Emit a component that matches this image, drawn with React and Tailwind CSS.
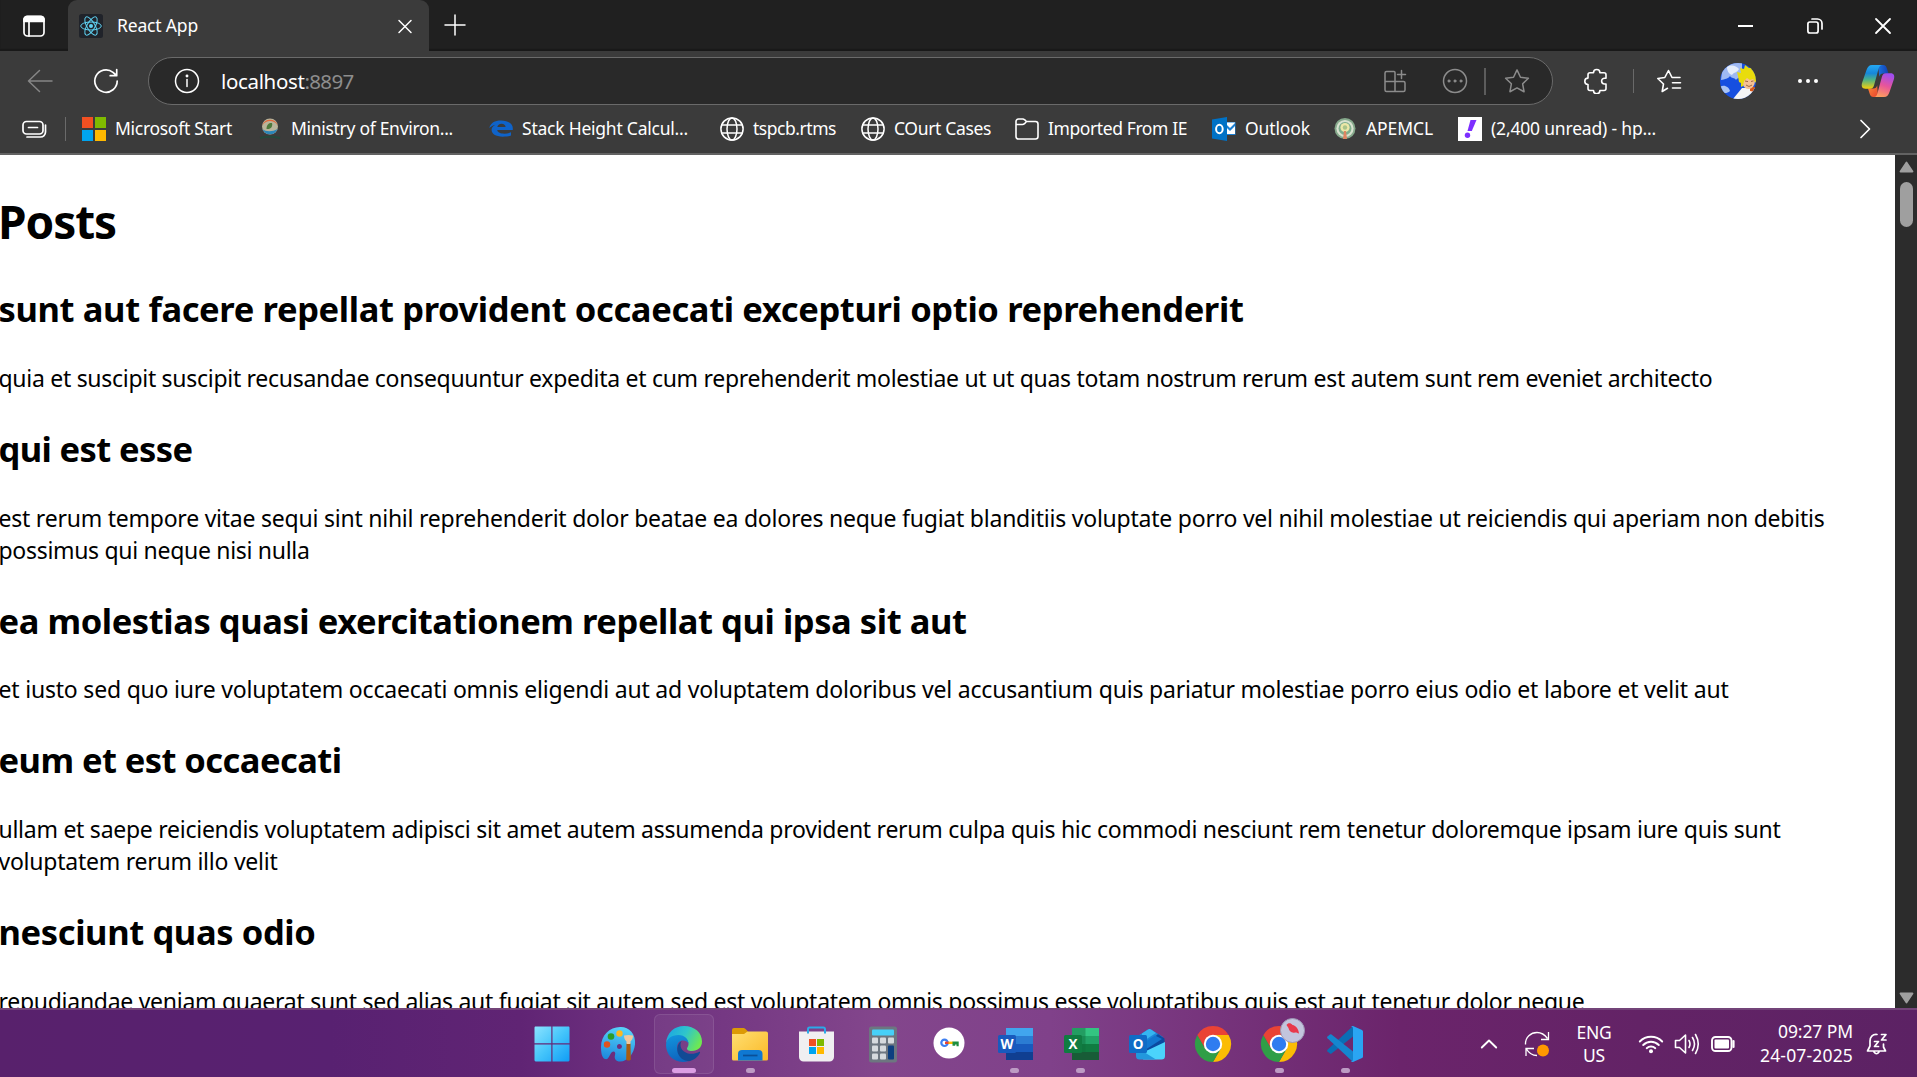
import { useLayoutEffect, useRef } from "react";

/* Single line of text tracked so that it spans exactly `w` pixels. */
function Fit({ w, children, className = "" }) {
  const ref = useRef(null);
  useLayoutEffect(() => {
    const el = ref.current;
    el.style.letterSpacing = "0px";
    const natural = el.getBoundingClientRect().width;
    el.style.letterSpacing = (w - natural) / children.length + "px";
  }, [w, children]);
  return (
    <span ref={ref} className={"inline-block whitespace-pre " + className}>
      {children}
    </span>
  );
}

function Svg({ s = 24, className = "", children, sw = 1.4, vb = "0 0 24 24" }) {
  return (
    <svg width={s} height={s} viewBox={vb} fill="none" stroke="currentColor" strokeWidth={sw} strokeLinecap="round" strokeLinejoin="round" className={"block shrink-0 " + className}>
      {children}
    </svg>
  );
}

const posts = [
  { title: ["sunt aut facere repellat provident occaecati excepturi optio reprehenderit", 1245], lines: [["quia et suscipit suscipit recusandae consequuntur expedita et cum reprehenderit molestiae ut ut quas totam nostrum rerum est autem sunt rem eveniet architecto", 1714]] },
  { title: ["qui est esse", 194], lines: [["est rerum tempore vitae sequi sint nihil reprehenderit dolor beatae ea dolores neque fugiat blanditiis voluptate porro vel nihil molestiae ut reiciendis qui aperiam non debitis", 1826], ["possimus qui neque nisi nulla", 311]] },
  { title: ["ea molestias quasi exercitationem repellat qui ipsa sit aut", 968], lines: [["et iusto sed quo iure voluptatem occaecati omnis eligendi aut ad voluptatem doloribus vel accusantium quis pariatur molestiae porro eius odio et labore et velit aut", 1730]] },
  { title: ["eum et est occaecati", 343], lines: [["ullam et saepe reiciendis voluptatem adipisci sit amet autem assumenda provident rerum culpa quis hic commodi nesciunt rem tenetur doloremque ipsam iure quis sunt", 1782], ["voluptatem rerum illo velit", 279]] },
  { title: ["nesciunt quas odio", 317], lines: [["repudiandae veniam quaerat sunt sed alias aut fugiat sit autem sed est voluptatem omnis possimus esse voluptatibus quis est aut tenetur dolor neque", 1586]] },
];

function ReactLogo() {
  return (
    <svg width="24" height="24" viewBox="0 0 24 24" fill="none" stroke="#5fd3f3" strokeWidth="1" className="shrink-0">
      <rect width="24" height="24" rx="2.5" fill="#20232a" stroke="none" />
      <ellipse cx="12" cy="12" rx="10.3" ry="4" />
      <ellipse cx="12" cy="12" rx="10.3" ry="4" transform="rotate(60 12 12)" />
      <ellipse cx="12" cy="12" rx="10.3" ry="4" transform="rotate(120 12 12)" />
      <circle cx="12" cy="12" r="2" fill="#5fd3f3" stroke="none" />
    </svg>
  );
}

function MicrosoftIcon() {
  return (
    <div className="grid h-6 w-6 shrink-0 grid-cols-2 gap-[2px]">
      <div className="bg-[#f25022]" />
      <div className="bg-[#7fba00]" />
      <div className="bg-[#00a4ef]" />
      <div className="bg-[#ffb900]" />
    </div>
  );
}

function MinistryIcon() {
  return (
    <svg width="24" height="24" viewBox="0 0 24 24" className="shrink-0">
      <circle cx="12" cy="9.500" r="8" fill="#b9b49a" />
      <path d="M4.300 8.500a8 8 0 0 1 15.400 0c-2-3.500-5-4.500-7.700-4.500S6.500 5 4.300 8.500Z" fill="#e2683c" />
      <path d="M4.500 12c3 3 10 3 15 0a8 8 0 0 1-15 0Z" fill="#2a86b8" />
      <path d="M8.500 12c0-5 3-6.500 5.500-6 1 3.500-1 6.500-5.500 6Z" fill="#4d7a3c" />
      <path d="M2 21q10-2.500 20 0" stroke="#24493a" strokeWidth="2" fill="none" />
    </svg>
  );
}

function LegacyEdgeIcon() {
  return (
    <svg width="24" height="24" viewBox="0 0 24 24" className="shrink-0">
      <path fillRule="evenodd" transform="translate(0 .8) scale(1 .86)" d="M.3 12C1.500 5.800 5.800 3 12 3c7.500 0 12 4.300 11.800 9.500v1.800H8.200c.5 3 3.500 4.200 7 4.200 2.500 0 4.800-.7 6.800-1.600v3.600c-2 1-5 1.500-8.200 1.500C6.500 22 2.600 18.600 2.600 14c0-2.600 1.400-4.800 3.800-6C4 8.500 2 9.800.3 12Zm8-1.300h8.300C16.500 8.600 15 7 12.500 7c-2.300 0-3.800 1.500-4.200 3.700Z" fill="#0f63c9" />
    </svg>
  );
}

function GlobeIcon() {
  return (
    <Svg sw={1.5}>
      <circle cx="12" cy="12" r="11.100" />
      <ellipse cx="12" cy="12" rx="5" ry="11.100" />
      <path d="M2 8h20M2 16h20" />
    </Svg>
  );
}

function FolderIcon() {
  return (
    <Svg sw={1.6}>
      <path d="M1 4.500A2.500 2.500 0 0 1 3.500 2h4.300c.7 0 1.300.3 1.700.7L11.500 4.500h9A2.500 2.500 0 0 1 23 7v12.500a2.500 2.500 0 0 1-2.500 2.500h-17A2.500 2.500 0 0 1 1 19.500ZM1 7.500h6.500c.8 0 1.400-.3 2-.8l2-2.200" />
    </Svg>
  );
}

function OldOutlookIcon() {
  return (
    <svg width="24" height="24" viewBox="0 0 24 24" className="shrink-0">
      <path d="M13 5h10.500v13H13Z" fill="#1a7fd4" />
      <path d="M14.500 7.500 18 11l5-5v-.5h-8.500ZM14.500 10.500l3.500 3.500 5-5v8h-8.500Z" fill="#fff" />
      <path d="M0 2.500 15 0v24L0 21.500Z" fill="#0072c6" />
      <ellipse cx="7.400" cy="12" rx="3.300" ry="4.200" fill="none" stroke="#fff" strokeWidth="2" />
    </svg>
  );
}

function ApemclIcon() {
  return (
    <svg width="24" height="24" viewBox="0 0 24 24" className="shrink-0">
      <circle cx="12" cy="11.500" r="10.500" fill="#86a98c" />
      <circle cx="12" cy="11.500" r="8.600" fill="#d8e2d0" />
      <circle cx="12" cy="11.500" r="6.500" fill="#7fae8d" />
      <circle cx="12" cy="10.500" r="4.600" fill="#ece7a8" />
      <circle cx="12" cy="10.500" r="2.200" fill="#a9c489" />
      <path d="M11 14h2l1 8h-4Z" fill="#e08562" />
    </svg>
  );
}

function YahooIcon() {
  return (
    <svg width="24" height="24" viewBox="0 0 24 24" className="shrink-0">
      <rect width="24" height="24" fill="#fff" />
      <path d="M12.500 3h6l-4.700 11h-4.300Z" fill="#7d2eff" />
      <circle cx="9.500" cy="18.300" r="2.700" fill="#7d2eff" />
    </svg>
  );
}

const bookmarks = [
  { icon: MicrosoftIcon, text: "Microsoft Start", w: 117, box: "w-[176px]" },
  { icon: MinistryIcon, text: "Ministry of Environ...", w: 162, box: "w-[231px]" },
  { icon: LegacyEdgeIcon, text: "Stack Height Calcul...", w: 166, box: "w-[231px]" },
  { icon: GlobeIcon, text: "tspcb.rtms", w: 83, box: "w-[141px]" },
  { icon: GlobeIcon, text: "COurt Cases", w: 97, box: "w-[154px]" },
  { icon: FolderIcon, text: "Imported From IE", w: 139, box: "w-[197px]" },
  { icon: OldOutlookIcon, text: "Outlook", w: 65, box: "w-[121px]" },
  { icon: ApemclIcon, text: "APEMCL", w: 67, box: "w-[125px]" },
  { icon: YahooIcon, text: "(2,400 unread) - hp...", w: 165, box: "w-[200px]" },
];

function TabStrip() {
  return (
    <div className="flex h-[51px] bg-[#202020] shadow-[inset_0_-2px_1px_#191919]">
      <div className="flex w-[68px] items-center justify-center">
        <Svg s={24} sw={1.7} className="text-white">
          <rect x="2" y="2.300" width="20" height="19.700" rx="3.500" />
          <path d="M2 7.500V5.500A3 3 0 0 1 5 2.500h14a3 3 0 0 1 3 3v2Z" fill="currentColor" />
          <path d="M7 8v14" />
        </Svg>
      </div>
      <div className="flex w-[361px] items-center rounded-t-[9px] bg-[#3b3b3b] pl-[11px]">
        <ReactLogo />
        <div className="ml-[14px] grow text-[17.500px] text-white">
          <Fit w={81}>React App</Fit>
        </div>
        <Svg s={16} vb="0 0 16 16" sw={1.500} className="mr-4 text-white">
          <path d="M2 2.500 14 14.500M14 2.500 2 14.500" />
        </Svg>
      </div>
      <Svg s={24} sw={1.500} className="mt-[13px] ml-[14px] text-white">
        <path d="M12 2v20M2 12h20" />
      </Svg>
      <div className="ml-auto flex items-center text-white">
        <div className="flex w-[69px] justify-center"><div className="h-[2px] w-[15px] bg-white" /></div>
        <div className="flex w-[69px] justify-center">
          <Svg s={18} vb="0 0 18 18" sw={1.700}>
            <rect x="1.900" y="5" width="10.200" height="11" rx="2" />
            <path d="M6 2h5.500A4.500 4.500 0 0 1 16 6.500V12" />
          </Svg>
        </div>
        <div className="flex w-[68px] justify-center">
          <Svg s={18} vb="0 0 18 18" sw={1.800}>
            <path d="M2 2l14 14M16 2 2 16" />
          </Svg>
        </div>
      </div>
    </div>
  );
}

function Avatar() {
  return (
    <svg width="36" height="36" viewBox="0 0 36 36" className="shrink-0">
      <defs>
        <clipPath id="av"><circle cx="18" cy="18" r="18" /></clipPath>
      </defs>
      <g clipPath="url(#av)">
        <rect width="36" height="36" fill="#164fe0" />
        <path d="M3 0h19v12c-2 3-4 2-6 5-2-3-4-1-6-4-2 3-5 3-9 4Z" fill="#9fb9f2" />
        <path d="M7 4c5-3 9-1 12 2-2 4-5 3-7 6-3-1-5-4-5-8Z" fill="#e5edfb" />
        <path d="M0 24c4-3 9 0 10 4-3 3-7 2-10 1Z" fill="#a9c4f4" />
        <path d="M22 25 13 36h22V25Z" fill="#f4f5f5" />
        <path d="M30 24h6l-1 5-5-1Z" fill="#d65618" />
        <ellipse cx="28.500" cy="18" rx="6.500" ry="8" fill="#f5c194" />
        <path d="M18 13 17 9l4 1-1-5 4 1 1-4 4 3 4-1 3 8v8l-3-4-3 1-3-2-3 3-1 5-2 1v-4l-2-1Z" fill="#e9dc0c" />
        <path d="m25 18 3 .6M31 18.500l2.500-.6M26 22q3 3 6 0" stroke="#8a5330" strokeWidth=".8" fill="none" />
      </g>
    </svg>
  );
}

function Copilot() {
  return (
    <svg width="34" height="34" viewBox="0 0 34 34" className="shrink-0">
      <defs>
        <linearGradient id="cpa" x1="0" y1="0" x2="0" y2="1"><stop offset="0" stopColor="#25a9f3" /><stop offset=".35" stopColor="#1687da" /><stop offset=".62" stopColor="#4db286" /><stop offset="1" stopColor="#f5cf0b" /></linearGradient>
        <linearGradient id="cpb" x1=".6" y1="0" x2=".3" y2="1"><stop offset="0" stopColor="#a04df0" /><stop offset=".5" stopColor="#e8559a" /><stop offset="1" stopColor="#fda05c" /></linearGradient>
        <linearGradient id="cpc" x1="0" y1="0" x2="1" y2="0"><stop offset="0" stopColor="#1b74dd" /><stop offset="1" stopColor="#123fb5" /></linearGradient>
        <linearGradient id="cpd" x1="0" y1="0" x2="1" y2="1"><stop offset="0" stopColor="#fb8a3b" /><stop offset="1" stopColor="#e8432d" /></linearGradient>
      </defs>
      <path d="M17 1h5c2.500 0 3.300 1.500 4 3.800L27.500 9.500H22c-2 0-3 1-3.700 3.300Z" fill="url(#cpc)" />
      <path d="M17 33h-4.500c-2.500 0-3.300-1.500-4-3.800L7 24.500h5.500c2 0 3-1 3.700-3.300Z" fill="url(#cpd)" />
      <path d="M21.500 1H11C8 1 6.500 3 5.500 6L1.200 18.500C0 22 1 24.700 4.500 24.700H9c2.500 0 3.500-1.500 4.200-4L17.500 5c.7-2.500 1.800-4 4-4Z" fill="url(#cpa)" />
      <path d="M13 33h10c3 0 4.500-2 5.500-5l4.300-12.500C34 12 33 9.300 29.500 9.300H25c-2.500 0-3.500 1.500-4.200 4L16.500 29c-.7 2.500-1.500 4-3.500 4Z" fill="url(#cpb)" />
    </svg>
  );
}

function Toolbar() {
  return (
    <div className="flex h-[60px] items-center text-white">
      <div className="flex w-20 justify-center">
        <Svg s={26} vb="0 0 26 26" sw={1.500} className="text-[#868686]"><path d="M25 13H1.500M12.500 2.500 1.500 13l11 10.500" /></Svg>
      </div>
      <div className="flex w-[52px] justify-center">
        <Svg s={26} vb="0 0 26 26" sw={1.700}>
          <path d="M24.200 13A11.200 11.200 0 1 1 20 4.300L23.500 7.500M23.700 1.500v6.200H17.200" />
        </Svg>
      </div>
      <div className="ml-4 flex h-12 w-[1405px] items-center rounded-full border border-[#6a6a6a] bg-[#292929]">
        <Svg s={26} vb="0 0 26 26" sw={1.500} className="ml-[25px]">
          <circle cx="13" cy="13" r="11.500" />
          <path d="M13 11.500v7" />
          <circle cx="13" cy="8" r=".7" fill="currentColor" />
        </Svg>
        <div className="ml-[21px] flex grow text-[20.500px]">
          <Fit w={83.5}>localhost</Fit>
          <Fit w={49} className="text-[#8d8d8d]">:8897</Fit>
        </div>
        <div className="flex items-center text-[#8c8c8c]">
          <Svg s={24} sw={1.500}>
            <path d="M2 21V4a1.500 1.500 0 0 1 1.500-1.500H11a1 1 0 0 1 1 1V22.500H3.500A1.500 1.500 0 0 1 2 21ZM2 12.500h18.500A1.500 1.500 0 0 1 22 14v7a1.500 1.500 0 0 1-1.500 1.500H12M18.500 1.500v8M14.500 5.500h8" />
          </Svg>
          <Svg s={26} vb="0 0 26 26" sw={1.500} className="ml-[35px]">
            <circle cx="13" cy="13" r="11.500" />
            <g fill="currentColor" strokeWidth=".6"><circle cx="7" cy="13" r="1.200" /><circle cx="13" cy="13" r="1.200" /><circle cx="19" cy="13" r="1.200" /></g>
          </Svg>
          <div className="ml-4 h-[27px] w-[2px] bg-[#5c5c5c]" />
          <Svg s={26} vb="0 0 24 24" sw={1.400} className="mr-[22px] ml-[18px]">
            <path d="m12 1.800 3.200 6.700 7.300 1-5.300 5.100 1.300 7.300L12 18.400l-6.500 3.500 1.300-7.300L1.500 9.500l7.300-1Z" />
          </Svg>
        </div>
      </div>
      <Svg s={26} vb="0 0 26 26" sw={1.600} className="ml-[30px]">
        <path d="M10.500 4.700a3.200 3.200 0 0 1 6.400 0H21a2 2 0 0 1 2 2v3.500h-1.500a2.900 2.900 0 0 0 0 5.800H23v4.500a2 2 0 0 1-2 2h-4.100a3.200 3.200 0 0 1-6.400 0H7a2 2 0 0 1-2-2v-4a3.200 3.200 0 0 1 0-6.400V6.700a2 2 0 0 1 2-2Z" />
      </Svg>
      <div className="ml-[24px] h-6 w-px bg-[#696969]" />
      <Svg s={26} vb="0 0 26 26" sw={1.600} className="ml-[22px]">
        <path d="M11.500 20.300 6.200 23.500l1.300-7.500L1.800 10.500l7-1L12.500 2.500 16 9.500h8M16.500 14.700H24.500M16.500 20H24.500" />
      </Svg>
      <div className="ml-[38px]"><Avatar /></div>
      <div className="ml-[42px] flex w-5 justify-between">
        <span className="h-[4px] w-[4px] rounded-full bg-white" />
        <span className="h-[4px] w-[4px] rounded-full bg-white" />
        <span className="h-[4px] w-[4px] rounded-full bg-white" />
      </div>
      <div className="ml-[43px]"><Copilot /></div>
    </div>
  );
}

function BookmarksBar() {
  return (
    <div className="flex h-[35px] items-center text-[17.500px] text-white">
      <Svg s={26} vb="0 0 26 26" sw={1.700} className="ml-[21px]">
        <rect x="2" y="5.500" width="20" height="12.500" rx="3.500" />
        <path d="M7.500 11.500h9M24.500 9v7a5 5 0 0 1-5 5H6" />
      </Svg>
      <div className="mr-4 ml-[18px] h-6 w-px bg-[#6a6a6a]" />
      {bookmarks.map((b) => (
        <div key={b.text} className={"flex shrink-0 items-center gap-[9px] " + b.box}>
          <b.icon />
          <Fit w={b.w}>{b.text}</Fit>
        </div>
      ))}
      <Svg s={20} vb="0 0 20 20" sw={1.700} className="mr-[42px] ml-auto"><path d="m6 1.500 8.500 8.500L6 18.500" /></Svg>
    </div>
  );
}

function Scrollbar() {
  return (
    <div className="flex w-[22px] shrink-0 flex-col items-center bg-[#2c2c2c] pt-[6px] pb-[4px]">
      <svg width="15" height="12" viewBox="0 0 15 12"><path d="M7.500 1.500 13.500 10.500h-12Z" fill="#9f9f9f" stroke="#9f9f9f" strokeWidth="1.800" strokeLinejoin="round" /></svg>
      <div className="mt-[9px] h-[45px] w-[13px] rounded-full bg-[#9f9f9f]" />
      <svg width="15" height="12" viewBox="0 0 15 12" className="mt-auto"><path d="M7.500 10.500 13.500 1.500h-12Z" fill="#9f9f9f" stroke="#9f9f9f" strokeWidth="1.800" strokeLinejoin="round" /></svg>
    </div>
  );
}

function Page() {
  return (
    <div className="h-full grow overflow-hidden bg-white text-black">
      <h1 className="mt-8 -ml-[2px] h-16 pt-1 text-[46px] leading-[60px] font-bold"><Fit w={118}>Posts</Fit></h1>
      <div className="mt-8 -ml-[1.5px] flex flex-col gap-[29.800px]">
        {posts.map((p) => (
          <div key={p.title[0]}>
            <h2 className="h-12 pt-[3px] text-[34.500px] leading-[45px] font-bold"><Fit w={p.title[1]}>{p.title[0]}</Fit></h2>
            <div className="mt-[30.800px] -mb-[0.8px] text-[23px] leading-8">
              {p.lines.map((l) => (
                <p key={l[0]} className="h-8"><Fit w={l[1]}>{l[0]}</Fit></p>
              ))}
            </div>
          </div>
        ))}
      </div>
    </div>
  );
}

function StartIcon() {
  return (
    <svg width="36" height="36" viewBox="0 0 36 36">
      <defs><linearGradient id="win" x1="0" y1="0" x2="1" y2="1"><stop offset="0" stopColor="#8ce3ff" /><stop offset=".5" stopColor="#45c5fb" /><stop offset="1" stopColor="#109cf5" /></linearGradient></defs>
      <path d="M1 .5h16.300v16.700H.5V1.500ZM18.500.5H35l.5 1v15.700h-17ZM.5 18.500h16.800v17H1.500l-1-1ZM18.500 18.500h17v16l-1 1h-16Z" fill="url(#win)" />
    </svg>
  );
}

function PaintIcon() {
  return (
    <svg width="36" height="36" viewBox="0 0 36 36">
      <defs><linearGradient id="pal" x1=".6" y1="0" x2=".4" y2="1"><stop offset="0" stopColor="#58d4fa" /><stop offset="1" stopColor="#1b87dc" /></linearGradient></defs>
      <path d="M21 1C10 .5 1 9 1 21c0 6 1 11 4 12 4 1 4-4 7-7 2-1.500 4 0 3 3-1 4 1 6.500 5 6.500 8 0 14-8 15-17C36 8 29 1 21 1Zm-1.500 22a2.500 2.500 0 1 1 0-5 2.500 2.500 0 0 1 0 5Z" fill="url(#pal)" fillRule="evenodd" />
      <circle cx="11" cy="10.500" r="3.300" fill="#2a9c28" /><circle cx="19.500" cy="7.500" r="3.200" fill="#fbb820" /><circle cx="7" cy="18.500" r="3.200" fill="#e0521d" />
      <path d="M26.500 17h4l.3 16c0 2-4.400 2-4.600 0Z" fill="#a85c10" />
      <path d="M24 9.500c3-.7 6-.7 9 0 0 3-1 4.500-2.500 6v2.500h-4v-2.500C25 14 24 12.500 24 9.500Z" fill="#f0c79c" />
    </svg>
  );
}

function EdgeIcon() {
  return (
    <svg width="38" height="38" viewBox="0 0 38 38">
      <defs>
        <linearGradient id="ed1" x1="0" y1=".2" x2="1" y2=".6"><stop offset="0" stopColor="#1aa4e4" /><stop offset=".5" stopColor="#2fc5cb" /><stop offset="1" stopColor="#70ea4e" /></linearGradient>
        <linearGradient id="ed2" x1=".3" y1="0" x2=".5" y2="1"><stop offset="0" stopColor="#1293dc" /><stop offset="1" stopColor="#0e63bd" /></linearGradient>
      </defs>
      <path d="M1 18C2 7.500 9.500 1 19 1c11 0 18 7 18 15.500 0 6-4.500 9.500-10 9.500-4 0-5-1.500-5-2.500s1.500-2 1.500-4.500c0-4-4-8-10-8C8 11 3 13.500 1 18Z" fill="url(#ed1)" />
      <path d="M1 20c0-6 5.500-10 12.500-10 6.500 0 10 4.500 10 8.500-1-2-3-3-5.500-3-4 0-7 4-5.500 9.500S19 34 24 36C11 40 1 31 1 20Z" fill="url(#ed2)" />
      <path d="M17 15.700c-8 4.300-6 19.300 7 20.500 5-1 9-4.500 11-8.500.3-.8-.3-1.200-1-.8-9 4.500-18.500 0-18.500-7 0-1.800.5-3.200 1.500-4.200Z" fill="#114a95" />
    </svg>
  );
}

function ExplorerIcon() {
  return (
    <svg width="38" height="38" viewBox="0 0 38 38">
      <defs><linearGradient id="fo" x1="0" y1="0" x2="1" y2="1"><stop offset="0" stopColor="#ffdf72" /><stop offset="1" stopColor="#fbb927" /></linearGradient></defs>
      <path d="M1 5a2 2 0 0 1 2-2h9c1 0 2 .5 2.500 1L17 6.500V14H1Z" fill="#dc9a06" />
      <path d="M1 9h12l3.500-2.500H35a2 2 0 0 1 2 2V34a1.500 1.500 0 0 1-1.500 1.500h-33A1.500 1.500 0 0 1 1 34Z" fill="url(#fo)" />
      <path d="M7 35.500V29a4 4 0 0 1 4-4h16.500a4 4 0 0 1 4 4v6.500Z" fill="#0f78d2" />
      <path d="M12 30.500h14.500" stroke="#0a4f98" strokeWidth="1.700" />
    </svg>
  );
}

function StoreIcon() {
  return (
    <svg width="38" height="38" viewBox="0 0 38 38">
      <path d="M11 9V4a1.500 1.500 0 0 1 1.500-1.500h14A1.500 1.500 0 0 1 28 4v5" fill="none" stroke="#2ba9e8" strokeWidth="2" />
      <path d="M2 6.500h35V32a4.500 4.500 0 0 1-4.500 4.500h-26A4.500 4.500 0 0 1 2 32Z" fill="#f0eff1" />
      <path d="M11 8.500V5M28 8.500V5" stroke="#2ba9e8" strokeWidth="2" />
      <path d="M12 14h7v7h-7Z" fill="#f05024" /><path d="M20 14h7v7h-7Z" fill="#7fba00" /><path d="M12 22h7v7h-7Z" fill="#00a4ef" /><path d="M20 22h7v7h-7Z" fill="#ffb900" />
    </svg>
  );
}

function CalcIcon() {
  return (
    <svg width="30" height="37" viewBox="0 0 30 37">
      <rect x="1" y=".5" width="28" height="36" rx="2.500" fill="#6d7680" />
      <rect x="4" y="3.500" width="22" height="6" rx="1" fill="#46d0f8" />
      <g fill="#d6dade"><rect x="4" y="11.500" width="6" height="6" rx="1" /><rect x="12" y="11.500" width="6" height="6" rx="1" /><rect x="20" y="11.500" width="6" height="6" rx="1" /><rect x="4" y="19.500" width="6" height="6" rx="1" /><rect x="12" y="19.500" width="6" height="6" rx="1" /><rect x="4" y="27.500" width="6" height="6" rx="1" /><rect x="12" y="27.500" width="6" height="6" rx="1" /></g>
      <rect x="20" y="19.500" width="6" height="14" rx="1" fill="#0d3f80" />
    </svg>
  );
}

function KeyIcon() {
  return (
    <svg width="32" height="32" viewBox="0 0 32 32" className="mb-[3px]">
      <circle cx="16" cy="16" r="15.500" fill="#fff" />
      <circle cx="11.500" cy="15.800" r="3.200" fill="none" stroke="#3d7ff0" strokeWidth="2.200" />
      <path d="M12 15.800h4" stroke="#ea4335" strokeWidth="2.400" /><path d="M15.500 15.800h4.500" stroke="#fbbc04" strokeWidth="2.400" />
      <path d="M19.500 14.600h6.200v4.600h-2.200v-1.700h-1.300v1.300h-2.700Z" fill="#1e8e3e" />
    </svg>
  );
}

function OfficeIcon({ letter, c, badge }) {
  return (
    <svg width="38" height="38" viewBox="0 0 38 38">
      <rect x="10" y="3" width="27" height="8.500" fill={c[0]} />
      <rect x="10" y="11" width="27" height="8.300" fill={c[1]} />
      <rect x="10" y="19" width="27" height="8.300" fill={c[2]} />
      <rect x="10" y="27" width="27" height="8" fill={c[3]} />
      {c[4] && <path d="M10 3h13.500v24H10Z" fill={c[4]} />}
      <rect x="2" y="10" width="18" height="18" rx="1.500" fill={badge} />
      <text x="11" y="24" textAnchor="middle" fontSize="13.500" fontWeight="700" fill="#fff" fontFamily="Open Sans, sans-serif">{letter}</text>
    </svg>
  );
}

function OutlookIcon() {
  return (
    <svg width="38" height="38" viewBox="0 0 38 38">
      <path d="M8 12 20 4.500a3 3 0 0 1 3 0L35 12l-12 12H8Z" fill="#1b86d8" />
      <path d="M14 8.500 20 4.500a3 3 0 0 1 3 0L28 8 14 17Z" fill="#35b5f0" />
      <path d="m30 9 6.500 4.500v8L22 28l-8-5Z" fill="#0b4aa0" />
      <path d="M27 10.500 17 17v8l17-11Z" fill="#1276cf" />
      <path d="M37 17v14a3.500 3.500 0 0 1-3.500 3.500H15L18 26Z" fill="#4bd3fb" />
      <path d="M8 22v9a3.500 3.500 0 0 0 3.500 3.500H28Z" fill="#2298dd" />
      <rect x="1" y="10" width="18" height="18" rx="1.500" fill="#0f6cc6" />
      <text x="10" y="24" textAnchor="middle" fontSize="13.500" fontWeight="700" fill="#fff" fontFamily="Open Sans, sans-serif">O</text>
    </svg>
  );
}

function ChromeIcon() {
  return (
    <svg width="38" height="38" viewBox="0 0 38 38">
      <path d="M19 19 3.400 10A18 18 0 0 1 34.600 10L19 10Z" fill="#ea4335" />
      <path d="M19 10h15.600A18 18 0 0 1 19 37l7.800-13.500Z" fill="#fbbc04" />
      <path d="M3.400 10A18 18 0 0 0 19 37l7.800-13.500L19 19l-7.800 4.500Z" fill="#2f9e47" />
      <path d="M3.400 10 11.200 23.500 19 19 19 10Z" fill="#ea4335" />
      <circle cx="19" cy="19" r="9.200" fill="#fff" />
      <circle cx="19" cy="19" r="7.200" fill="#2f7cf0" />
    </svg>
  );
}

function ChromeProfileIcon() {
  return (
    <div className="relative">
      <ChromeIcon />
      <svg width="25" height="25" viewBox="0 0 25 25" className="absolute -top-[7px] -right-[7px]">
        <circle cx="12.500" cy="12.500" r="12" fill="#c3c5dd" stroke="#9d96b4" />
        <path d="M6.500 7c1.500-2.500 4.500-2 6 0 3.500.5 6 4 6.500 8.500-2-.8-3-1.300-4-1-3.500 1-6-2-6.500-4.500Z" fill="#e8394b" />
      </svg>
    </div>
  );
}

function CodeIcon() {
  return (
    <svg width="38" height="38" viewBox="0 0 38 38">
      <path d="M27 1v10.500L5.500 28.500q-.8.600-1.600 0L1.500 26.500q-.9-.9 0-1.800Z" fill="#0b6db5" />
      <path d="M27 37V26.500L5.500 9.500q-.8-.6-1.600 0L1.500 11.500q-.9.900 0 1.800Z" fill="#1586cf" />
      <path d="m27 1 9 4q1 .5 1 1.500v25q0 1-1 1.500l-9 4q-1.500.3-2.500-.8 2.500.8 2.500-2V3.800q0-2.800-2.500-2Q25.500.7 27 1Z" fill="#2aa5f3" />
    </svg>
  );
}

const WordIcon = () => <OfficeIcon letter="W" c={["#41a5ee", "#2b7cd3", "#185abd", "#103f91"]} badge="#185abd" />;
const ExcelIcon = () => <OfficeIcon letter="X" c={["#33c481", "#21a366", "#107c41", "#185c37", "rgba(16,110,60,.45)"]} badge="#107c41" />;

const apps = [
  { id: "start", icon: StartIcon },
  { id: "paint", icon: PaintIcon },
  { id: "edge", icon: EdgeIcon, active: true },
  { id: "files", icon: ExplorerIcon, open: true },
  { id: "store", icon: StoreIcon },
  { id: "calc", icon: CalcIcon },
  { id: "key", icon: KeyIcon },
  { id: "word", icon: WordIcon, open: true },
  { id: "excel", icon: ExcelIcon, open: true },
  { id: "mail", icon: OutlookIcon },
  { id: "chrome", icon: ChromeIcon },
  { id: "chrome2", icon: ChromeProfileIcon, open: true },
  { id: "code", icon: CodeIcon, open: true },
];

function Taskbar() {
  return (
    <div className="flex h-[69px] shrink-0 border-t-2 border-[#734479] bg-[linear-gradient(90deg,#58216c_0px,#582171_330px,#602474_520px,#6a2d7c_600px,#83468c_880px,#80418a_1050px,#6b246b_1400px,#632366_1640px,#5c2264_1917px)] text-[17.500px] text-white">
      <div className="ml-[519px] flex">
        {apps.map((a) => (
          <div key={a.id} className="flex w-[66.100px] justify-center pt-1">
            <div className={"flex h-[60px] w-[60px] flex-col items-center rounded-md border " + (a.active ? "border-white/10 bg-white/5" : "border-transparent")}>
              <div className="flex h-[53px] shrink-0 items-center pt-[5px]"><a.icon /></div>
              {a.active && <div className="h-[5px] w-6 shrink-0 rounded-full bg-[#dc9fe4]" />}
              {a.open && <div className="h-[5px] w-[9px] shrink-0 rounded-full bg-[#bd9bc4]" />}
            </div>
          </div>
        ))}
      </div>
      <div className="ml-auto flex items-center">
        <Svg s={18} vb="0 0 18 18" sw={1.900}><path d="m1.800 12.500 7.200-7 7.200 7" /></Svg>
        <svg width="26" height="26" viewBox="0 0 26 26" fill="none" stroke="#fff" strokeWidth="1.300" className="ml-[26px]">
          <path d="M1.500 13.500C1 6 7 1.500 13 1.500c4 0 8 2.500 10.500 6M24.500 1v7.500H17M2 25v-7.500h8M2.500 18c2.500 4.500 6.500 6.500 10.500 6.500" />
          <circle cx="19" cy="19.500" r="6" fill="#ff9800" stroke="none" />
        </svg>
        <div className="ml-[26px] flex w-[36px] flex-col items-center leading-[23px]">
          <Fit w={35}>ENG</Fit>
          <Fit w={22}>US</Fit>
        </div>
        <svg width="26" height="22" viewBox="0 0 26 22" fill="none" stroke="#fff" strokeWidth="1.900" strokeLinecap="round" className="ml-[26px]">
          <path d="M1.800 8.500a15.700 15.700 0 0 1 22.400 0M5.200 12a11 11 0 0 1 15.600 0M8.700 15.200a6.200 6.200 0 0 1 8.600 0" />
          <circle cx="13" cy="18.300" r="2" fill="#fff" stroke="none" />
        </svg>
        <svg width="26" height="22" viewBox="0 0 26 22" fill="none" stroke="#fff" strokeWidth="1.600" strokeLinecap="round" strokeLinejoin="round" className="ml-[10px]">
          <path d="M1.500 7.500h4L11.500 2v18l-6-5.500h-4ZM15 7.500q2 3.500 0 7M18.500 4.500q4 6.500 0 13M21.500 1.500q5.500 9.500 0 19" />
        </svg>
        <svg width="26" height="18" viewBox="0 0 26 18" fill="none" stroke="#fff" strokeWidth="1.900" className="ml-[10px]">
          <rect x="2" y="2" width="19.500" height="14" rx="3.500" />
          <rect x="4.500" y="4.500" width="14.500" height="9" rx="1" fill="#fff" stroke="none" />
          <path d="M23.500 6v6" strokeLinecap="round" strokeWidth="2.200" />
        </svg>
        <div className="ml-[23px] flex w-[94px] flex-col items-end pb-px leading-6">
          <Fit w={75}>09:27 PM</Fit>
          <Fit w={93}>24-07-2025</Fit>
        </div>
        <svg width="24" height="24" viewBox="0 0 24 24" fill="none" stroke="#fff" strokeWidth="1.700" strokeLinecap="round" strokeLinejoin="round" className="mr-[28px] ml-[12px]">
          <path d="M12 2.500C7.500 2 5 5 5 9v5L2.500 19h18L18.500 15v-3M9 20q2.500 3.500 5 0M9.500 9.500H13.500l-4 5H13.500M16.500 2.500h4.500L16.500 8H21" />
        </svg>
      </div>
    </div>
  );
}

export default function App() {
  return (
    <div className="flex h-[1077px] w-[1917px] flex-col overflow-hidden font-['Noto_Sans','Open_Sans',sans-serif]">
      <div className="h-[155px] shrink-0 border-b-2 border-[#626262] bg-[#3b3b3b]">
        <TabStrip />
        <Toolbar />
        <BookmarksBar />
      </div>
      <div className="flex min-h-0 grow">
        <Page />
        <Scrollbar />
      </div>
      <Taskbar />
    </div>
  );
}
